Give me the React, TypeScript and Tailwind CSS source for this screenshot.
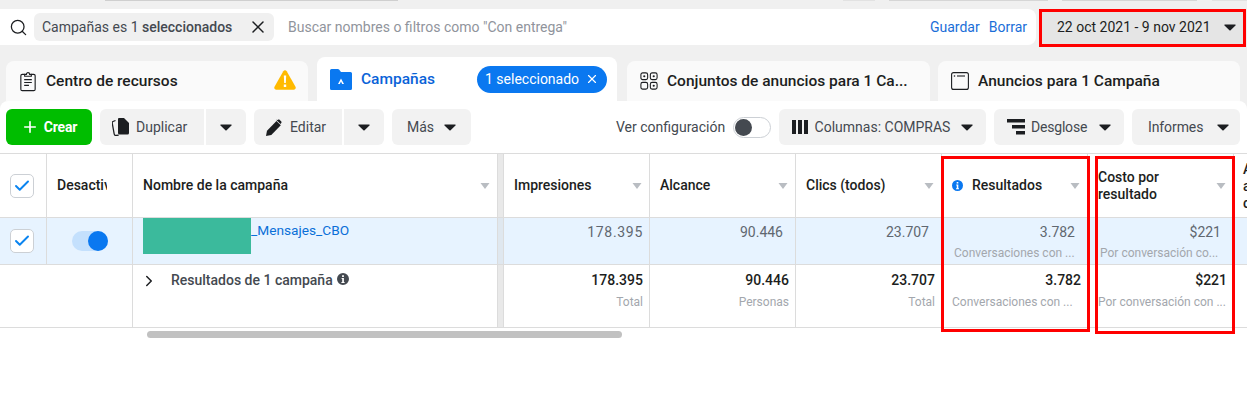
import React from 'react';
import { Check, ChevronRight, Plus, Search, X } from 'lucide-react';

const Caret = ({ className = 'text-[#1c1e21]' }: { className?: string }) => (
  <svg width="12" height="7" viewBox="0 0 12 7" className={`shrink-0 ${className}`}>
    <path d="M1 .5h10c.6 0 .9.7.5 1.1L6.6 6.3c-.3.3-.9.3-1.2 0L.5 1.6C.1 1.2.4.5 1 .5z" fill="currentColor" />
  </svg>
);

const SortCaret = () => (
  <svg width="10" height="6" viewBox="0 0 10 6" className="shrink-0 text-[#b9bdc2]">
    <path d="M.5 0h9L5 6z" fill="currentColor" />
  </svg>
);

const InfoDot = ({ className, size = 11 }: { className: string; size?: number }) => (
  <svg width={size} height={size} viewBox="0 0 12 12" className={`shrink-0 ${className}`}>
    <path
      fillRule="evenodd"
      d="M6 0a6 6 0 1 1 0 12A6 6 0 0 1 6 0zm-.9 2.2v1.7h1.8V2.2zM4.6 5v1h.6v3h-.8v1h3.2V9h-.7V5z"
      fill="currentColor"
    />
  </svg>
);

const ClipboardIcon = () => (
  <svg width="18" height="21" viewBox="0 0 18 22" fill="none" stroke="#1c1e21" strokeWidth="1.2" className="shrink-0">
    <path d="M5.5 3.5H3a1.5 1.5 0 0 0-1.5 1.5v14A1.5 1.5 0 0 0 3 20.500h12a1.500 1.500 0 0 0 1.500-1.500V5A1.500 1.500 0 0 0 15 3.500h-2.500" />
    <path d="M5.500 5.500V3.500h1.800c0-2.300 3.400-2.300 3.400 0h1.800v2z" />
    <path d="M5 9h8M5 12h8M5 15h5" />
  </svg>
);

const WarningIcon = () => (
  <svg width="22" height="20" viewBox="0 0 22 20" className="shrink-0">
    <path d="M9.300 1.200c.8-1.400 2.600-1.400 3.400 0l8.800 15.600c.7 1.300-.2 2.900-1.700 2.900H2.200C.7 19.700-.2 18.100.5 16.800z" fill="#ffba00" />
    <path d="M9.800 5.500h2.400l-.4 7.500h-1.600zM9.800 14.500h2.400v2.400H9.800z" fill="#fff" />
  </svg>
);

const FolderIcon = () => (
  <svg width="22" height="21" viewBox="0 0 22 21" className="shrink-0">
    <path d="M1.500 0h6.300c.5 0 1 .2 1.300.6L11 3h9.500A1.500 1.500 0 0 1 22 4.500v15a1.500 1.500 0 0 1-1.500 1.500h-19A1.500 1.500 0 0 1 0 19.500v-18A1.500 1.500 0 0 1 1.500 0z" fill="#0a78f0" />
    <path d="M11 9.500l3 5.500h-1.800L11 12.600 9.800 15H8z" fill="#fff" />
  </svg>
);

const AdSetIcon = () => (
  <svg width="18" height="18" viewBox="0 0 20 20" fill="none" stroke="#1c1e21" strokeWidth="1.200" className="shrink-0">
    <rect x="1" y="1" width="7.500" height="7.500" rx="2" />
    <rect x="11.500" y="1" width="7.500" height="7.500" rx="2" />
    <rect x="1" y="11.500" width="7.500" height="7.500" rx="2" />
    <rect x="11.500" y="11.500" width="7.500" height="7.500" rx="2" />
    <circle cx="4.750" cy="4.750" r="1.200" fill="#1c1e21" stroke="none" />
    <circle cx="15.250" cy="4.750" r="1.200" fill="#1c1e21" stroke="none" />
    <circle cx="15.250" cy="15.250" r="1.200" fill="#1c1e21" stroke="none" />
  </svg>
);

const AdIcon = () => (
  <svg width="18" height="18" viewBox="0 0 18 18" fill="none" stroke="#1c1e21" strokeWidth="1.100" className="shrink-0">
    <rect x=".6" y=".6" width="16.800" height="16.800" rx="2" />
    <path d="M6 4h8" />
    <circle cx="3.500" cy="4" r=".8" fill="#1c1e21" stroke="none" />
  </svg>
);

const DuplicateIcon = () => (
  <svg width="17" height="18" viewBox="0 0 17 18" className="shrink-0">
    <path d="M7 0h5l5 5v10a1.500 1.500 0 0 1-1.500 1.500h-8A1.500 1.500 0 0 1 6 15V1a1 1 0 0 1 1-1z" fill="#1c1e21" />
    <path d="M3.500 2.500L1 3.500c-.6.3-.9.900-.8 1.500l2 11c.2 1 1 1.600 2 1.500l2.500-.4" fill="none" stroke="#1c1e21" strokeWidth="1.300" />
  </svg>
);

const PencilIcon = () => (
  <svg width="16" height="17" viewBox="0 0 16 17" className="shrink-0">
    <path d="M0 17l1-5.300L10.500 2l4.300 4.300L5.300 16z" fill="#1c1e21" />
    <path d="M11.700.9c.6-.6 1.500-.6 2.100 0l1.300 1.300c.6.600.6 1.500 0 2.100l-.6.700-4.300-4.300z" fill="#1c1e21" />
  </svg>
);

const ColumnsIcon = () => (
  <svg width="16" height="14" viewBox="0 0 16 14" className="shrink-0">
    <path d="M0 0h4v14H0zM6 0h4v14H6zM12 0h4v14h-4z" fill="#1c1e21" />
  </svg>
);

const BreakdownIcon = () => (
  <svg width="18" height="16" viewBox="0 0 18 16" className="shrink-0">
    <path d="M0 0h18v3.500H0zM5 6h13v3.500H5zM9 12h9v3.500H9z" fill="#1c1e21" />
  </svg>
);

const Tool = ({ children, className }: { children: React.ReactNode; className: string }) => (
  <button className={`flex h-9 items-center justify-center rounded-md bg-[#f2f2f2] text-[14px] text-[#444950] ${className}`}>
    {children}
  </button>
);

const Checkbox = () => (
  <span className="flex h-6 w-6 items-center justify-center rounded-[5px] border border-[#ccd0d5] bg-white">
    <Check size={18} strokeWidth={2.6} className="text-[#0a84f0]" />
  </span>
);

const Tab = ({ icon, label, className = '' }: { icon: React.ReactNode; label: string; className?: string }) => (
  <div className={`flex h-[40px] w-[302px] items-center gap-[9px] rounded-t-lg bg-[#fafafa] ${className}`}>
    {icon}
    <span className="truncate text-[15.5px] font-medium leading-[23px] text-[#1c1e21]">{label}</span>
  </div>
);

const gridCols = 'grid grid-cols-[47px_86px_365px_6px_146px_146px_146px_146px_146px_13px] w-[1247px]';
const line = 'border-r border-[#dcdcdc]';

const HeadCell = ({ label, info }: { label: React.ReactNode; info?: boolean }) => (
  <div className={`flex items-center pl-[10px] pr-[7px] ${line}`}>
    {info && <InfoDot className="mr-[9px] text-[#0a78f0]" />}
    <span className="flex-1 text-[14px] font-medium leading-[17px] text-[#1c1e21]">{label}</span>
    <SortCaret />
  </div>
);

const DataCell = ({ value, sub, className = '' }: { value: string; sub?: string; className?: string }) => (
  <div className={`pl-[12px] pr-[12px] pt-[5px] text-right ${line}`}>
    <div className={`text-[14px] leading-[18px] text-[#606770] ${className}`}>{value}</div>
    {sub && <div className="mt-[5px] whitespace-nowrap text-left text-[12px] leading-[15px] text-[#a3a7ad]">{sub}</div>}
  </div>
);

const TotalCell = ({ value, sub, left }: { value: string; sub: string; left?: boolean }) => (
  <div className={`pl-[10px] pr-[6px] pt-[6px] text-right ${line}`}>
    <div className="text-[14px] font-medium leading-[18px] text-[#1c1e21]">{value}</div>
    <div className={`mt-[6px] whitespace-nowrap text-[12px] leading-[15px] text-[#a3a7ad] ${left ? 'text-left' : ''}`}>{sub}</div>
  </div>
);

export default function App() {
  return (
    <div className="relative h-[413px] w-[1247px] overflow-hidden bg-white font-['Roboto',sans-serif]">
      <div className="bg-[#f0f0f0] pb-[8px]">
        {/* --- Bottom edge of whatever sits above the crop --- */}
        <div className="flex h-[9px] items-start">
          <span className="ml-[105px] h-px w-[293px] bg-[#cfcfcf]" />
          <span className="ml-[445px] h-px w-[32px] bg-[#e2e2e2]" />
          <span className="ml-[14px] h-px w-[159px] bg-[#d6d6d6]" />
          <span className="ml-[14px] h-px w-[135px] bg-[#d6d6d6]" />
          <span className="ml-[15px] h-px flex-1 bg-[#e2e2e2]" />
        </div>

        {/* --- Search row --- */}
        <div className="flex h-[38px] items-start">
          <div className="flex h-[36px] w-[1036px] items-center rounded-r-lg bg-white pl-[9px] pr-[9px]">
            <Search size={19} strokeWidth={1.6} className="shrink-0 text-[#1c1e21]" />
            <div className="ml-[6px] flex h-[28px] w-[240px] items-center justify-between rounded-md bg-[#f0f0f0] pl-[8px] pr-[6px] text-[14px] text-[#444950]">
              <span>
                Campañas es 1 <span className="font-medium">seleccionados</span>
              </span>
              <X size={20} strokeWidth={1.8} className="text-[#1c1e21]" />
            </div>
            <span className="ml-[14px] flex-1 text-[14px] text-[#90949c]">Buscar nombres o filtros como "Con entrega"</span>
            <span className="text-[14px] text-[#1a6ed8]">Guardar</span>
            <span className="ml-[9px] text-[14px] text-[#1a6ed8]">Borrar</span>
          </div>
          <div className="ml-[3px] flex h-[38px] w-[207px] items-center border-[3px] border-[#ff0000] bg-[#e5e5e5] pb-[2px] pl-[15px] pr-[7px] text-[14px] text-[#1c1e21]">
            <span className="flex-1">22 oct 2021 - 9 nov 2021</span>
            <Caret />
          </div>
        </div>

        {/* --- Tabs --- */}
        <div className="mt-[10px] flex h-[44px] items-end pl-[6px]">
          <Tab icon={<ClipboardIcon />} label="Centro de recursos" className="pl-[13px] pr-[12px]" />
          <div className="flex h-[44px] w-[300px] items-center rounded-t-lg bg-white pl-[13px] pr-[10px] ml-[9px]">
            <FolderIcon />
            <span className="ml-[9px] flex-1 text-[15.5px] font-medium leading-[25px] text-[#0a63d8]">Campañas</span>
            <span className="flex h-[27px] w-[130px] items-center justify-between rounded-full bg-[#0a78f0] pl-[8px] pr-[8px] text-[14px] text-white">
              1 seleccionado
              <X size={14} strokeWidth={2} />
            </span>
          </div>
          <Tab icon={<AdSetIcon />} label="Conjuntos de anuncios para 1 Ca..." className="ml-[10px] w-[303px] pl-[13px]" />
          <Tab icon={<AdIcon />} label="Anuncios para 1 Campaña" className="ml-[8px] pl-[13px]" />
        </div>
      </div>

      {/* warning sits at the far end of the first tab */}
      <div className="absolute left-[274px] top-[70px]">
        <WarningIcon />
      </div>

      <div className="relative -mt-[8px] rounded-t-lg bg-white">
        {/* --- Toolbar --- */}
        <div className="flex h-[52px] items-center pl-[6px]">
          <button className="flex h-9 w-[86px] items-center justify-center gap-[5px] rounded-md bg-[#00bd00] text-[14px] font-bold tracking-[-0.2px] text-white">
            <Plus size={18} strokeWidth={2.2} />
            Crear
          </button>
          <Tool className="ml-[8px] w-[104px] justify-start gap-[7px] rounded-r-none pl-[12px]">
            <DuplicateIcon />
            Duplicar
          </Tool>
          <Tool className="ml-[2px] w-[40px] rounded-l-none">
            <Caret />
          </Tool>
          <Tool className="ml-[8px] w-[88px] justify-start gap-[8px] rounded-r-none pl-[12px]">
            <PencilIcon />
            Editar
          </Tool>
          <Tool className="ml-[2px] w-[40px] rounded-l-none">
            <Caret />
          </Tool>
          <Tool className="ml-[8px] w-[79px] gap-[10px]">
            Más
            <Caret />
          </Tool>
          <span className="ml-[145px] w-[117px] text-[14px] text-[#444950]">Ver configuración</span>
          <span className="flex h-[21px] w-[38px] items-center rounded-full border border-[#ccd0d5] bg-white pl-[1px]">
            <span className="h-[17px] w-[17px] rounded-full bg-[#444950]" />
          </span>
          <Tool className="ml-[8px] w-[207px] gap-[7px]">
            <ColumnsIcon />
            Columnas: COMPRAS
            <span className="ml-[4px]">
              <Caret />
            </span>
          </Tool>
          <Tool className="ml-[8px] w-[130px] justify-start gap-[6px] pl-[13px]">
            <BreakdownIcon />
            <span className="tracking-[-0.2px]">Desglose</span>
            <span className="ml-[6px]">
              <Caret />
            </span>
          </Tool>
          <Tool className="ml-[8px] w-[108px] justify-start gap-[14px] pl-[16px]">
            <span className="tracking-[-0.1px]">Informes</span>
            <Caret />
          </Tool>
        </div>

        {/* --- Table --- */}
        <div className={`${gridCols} h-[65px] border-y border-[#dcdcdc]`}>
          <div className={`flex items-center pl-[10px] ${line}`}>
            <Checkbox />
          </div>
          <div className={`flex items-center overflow-hidden pl-[10px] ${line}`}>
            <span className="w-[50px] overflow-hidden whitespace-nowrap text-[14px] font-medium text-[#1c1e21]">Desactivado</span>
          </div>
          <HeadCell label="Nombre de la campaña" />
          <div className={`bg-[#e9e9e9] ${line}`} />
          <HeadCell label="Impresiones" />
          <HeadCell label="Alcance" />
          <HeadCell label="Clics (todos)" />
          <HeadCell label="Resultados" info />
          <HeadCell
            label={
              <>
                Costo por
                <br />
                resultado
              </>
            }
          />
          <div className="pl-[9px] pt-[7px] text-[14px] font-medium leading-[17px] text-[#1c1e21]">
            Alcance
            <br />
            alcanzado
            <br />
            con
          </div>
        </div>

        <div className={`${gridCols} h-[47px] border-b border-[#dcdcdc] bg-[#e7f3ff]`}>
          <div className={`flex items-center pl-[10px] ${line}`}>
            <Checkbox />
          </div>
          <div className={`flex items-center justify-end pr-[24px] ${line}`}>
            <span className="flex h-5 w-9 justify-end rounded-full bg-[#c4e0fd]">
              <span className="h-5 w-5 rounded-full bg-[#0a78f0]" />
            </span>
          </div>
          <div className={`flex items-start pl-[10px] ${line}`}>
            <span className="h-[36px] w-[108px] bg-[#3bba9c]" />
            <span className="mt-[4px] text-[13.7px] leading-[17px] text-[#0a6fd8]">_Mensajes_CBO</span>
          </div>
          <div className={`bg-[#dfe7ef] ${line}`} />
          <DataCell value="178.395" className="-mr-[6px] tracking-[0.7px]" />
          <DataCell value="90.446" />
          <DataCell value="23.707" />
          <DataCell value="3.782" sub="Conversaciones con ..." />
          <DataCell value="$221" sub="Por conversación co..." />
          <div />
        </div>

        <div className={`${gridCols} h-[63px] border-b border-[#dcdcdc]`}>
          <div />
          <div className={line} />
          <div className={`flex items-start pl-[7px] pt-[6px] ${line}`}>
            <ChevronRight size={18} strokeWidth={2} className="mt-[1px] shrink-0 text-[#1c1e21]" />
            <span className="ml-[13px] text-[14px] font-medium leading-[18px] text-[#444950]">Resultados de 1 campaña</span>
            <InfoDot className="ml-[4px] mt-[2px] text-[#444950]" size={12} />
          </div>
          <div className={`bg-[#e9e9e9] ${line}`} />
          <TotalCell value="178.395" sub="Total" />
          <TotalCell value="90.446" sub="Personas" />
          <TotalCell value="23.707" sub="Total" />
          <TotalCell value="3.782" sub="Conversaciones con ..." left />
          <TotalCell value="$221" sub="Por conversación con ..." left />
          <div />
        </div>

        {/* --- Horizontal scrollbar --- */}
        <div className="ml-[147px] mt-[3px] h-[7px] w-[475px] rounded-full bg-[#c1c1c1]" />
      </div>

      {/* --- Red highlight boxes drawn over the table --- */}
      <div className="absolute left-[941px] top-[156px] h-[176px] w-[149px] border-[3px] border-[#ff0000]" />
      <div className="absolute left-[1095px] top-[156px] h-[178px] w-[140px] border-[3px] border-[#ff0000]" />
    </div>
  );
}
